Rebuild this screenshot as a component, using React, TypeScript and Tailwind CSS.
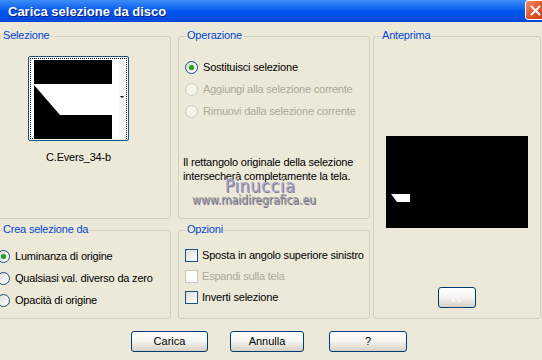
import React from "react";

function Group({ label, className, children }: { label: string; className?: string; children?: React.ReactNode }) {
  return (
    <div className={`relative rounded-[3px] border border-[#D0D0BF] ${className ?? ""}`}>
      <span className="absolute -top-[8px] left-[7px] bg-[#ECE9D8] px-[1px] text-[11px] leading-[13px] text-[#0046D5]">
        {label}
      </span>
      {children}
    </div>
  );
}

function Radio({ checked, disabled, label }: { checked?: boolean; disabled?: boolean; label: string }) {
  return (
    <div className="flex h-[22px] items-center gap-[5px] whitespace-nowrap">
      <span
        className={`flex h-[13px] w-[13px] shrink-0 items-center justify-center rounded-full border ${
          disabled
            ? "border-[#CAC8BB] bg-[#F5F4EA]"
            : "border-[#1C5180] bg-gradient-to-br from-[#DCDCD7] to-white"
        }`}
      >
        {checked && <span className="h-[5px] w-[5px] rounded-full bg-[#21A121] shadow-[0_0_1px_#7BD47B]" />}
      </span>
      <span className={disabled ? "text-[#ACA899]" : "text-black"}>{label}</span>
    </div>
  );
}

function Check({ disabled, label }: { disabled?: boolean; label: string }) {
  return (
    <div className="flex h-[21px] items-center gap-[4px] whitespace-nowrap">
      <span
        className={`h-[13px] w-[13px] shrink-0 border ${
          disabled ? "border-[#CAC8BB] bg-white" : "border-[#1C5180] bg-gradient-to-br from-[#DCDCD7] to-white"
        }`}
      />
      <span className={disabled ? "text-[#ACA899]" : "text-black"}>{label}</span>
    </div>
  );
}

function Button({ className, children }: { className?: string; children?: React.ReactNode }) {
  return (
    <button
      className={`flex h-[21px] items-center justify-center rounded-[3px] border border-[#003C74] bg-gradient-to-b from-white via-[#F4F3EE] to-[#D6D0C5] text-[11px] text-black ${className ?? ""}`}
    >
      {children}
    </button>
  );
}

export default function App() {
  return (
    <div className="flex h-[360px] w-[542px] flex-col overflow-hidden bg-[#ECE9D8] font-['Liberation_Sans',Arial,sans-serif] text-[11px] leading-[13px] tracking-[-0.2px] text-black">
      {/* title bar */}
      <div className="flex h-[22px] shrink-0 items-center justify-between bg-gradient-to-b from-[#3C8CF8] via-[#0058EE] to-[#0046D8] pl-[8px]">
        <span className="text-[13px] font-bold tracking-normal text-white [text-shadow:1px_1px_0_#0A1E8C]">Carica selezione da disco</span>
        <span className="mb-[2px] flex h-[20px] w-[21px] -mr-[4px] items-center justify-center rounded-[3px] border border-white bg-gradient-to-br from-[#F08F6C] via-[#E0552E] to-[#C83A12]">
          <svg width="11" height="11" viewBox="0 0 11 11">
            <path d="M1.5 1.5 L9.5 9.5 M9.5 1.5 L1.5 9.5" stroke="white" strokeWidth="2" strokeLinecap="round" />
          </svg>
        </span>
      </div>

      {/* groups */}
      <div className="mt-[14px] flex">
        <div className="-ml-[6px] flex w-[177px] flex-col gap-[11px]">
          <Group label="Selezione" className="h-[183px]">
            <div className="flex flex-col items-start pl-[33px] pt-[19px]">
              <div className="h-[85px] w-[101px] rounded-[2px] border border-[#1C5180] bg-white p-[1px]">
                <div className="relative h-full w-full border border-dotted border-black">
                  <svg width="97" height="81" viewBox="0 0 97 81" className="block">
                    <rect x="3" y="1" width="78" height="79" fill="black" />
                    <polygon points="3,25 81,25 81,56 29,56 3,26" fill="white" />
                    <rect x="81" y="1" width="7" height="79" fill="white" />
                    <rect x="88" y="1" width="6" height="79" fill="#F2F2F2" />
                    <polygon points="89,37 93,37 91,39" fill="black" />
                  </svg>
                </div>
              </div>
              <span className="mt-[10px] w-[101px] text-center">C.Evers_34-b</span>
            </div>
          </Group>
          <Group label="Crea selezione da" className="h-[89px]">
            <div className="flex flex-col pl-[2px] pt-[14px]">
              <Radio checked label="Luminanza di origine" />
              <Radio label="Qualsiasi val. diverso da zero" />
              <Radio label="Opacità di origine" />
            </div>
          </Group>
        </div>

        <div className="ml-[7px] flex w-[192px] flex-col gap-[11px]">
          <Group label="Operazione" className="h-[183px]">
            <div className="flex flex-col pl-[6px] pt-[19px]">
              <Radio checked label="Sostituisci selezione" />
              <Radio disabled label="Aggiungi alla selezione corrente" />
              <Radio disabled label="Rimuovi dalla selezione corrente" />
            </div>
            <div className="mt-[33px] pl-[4px] leading-[14px]">
              <p>Il rettangolo originale della selezione</p>
              <p>intersecherà completamente la tela.</p>
            </div>
            <div className="-mt-[6px] flex flex-col items-center">
              <span className="mr-[28px] font-['DejaVu_Sans_Condensed','DejaVu_Sans',sans-serif] text-[18px] leading-[17px] tracking-[0.5px] text-[#A7A2C6] [text-shadow:1px_1px_0_#7D7898]">
                Pinuccia
              </span>
              <span className="mr-[40px] font-['DejaVu_Sans_Condensed','DejaVu_Sans',sans-serif] text-[12px] leading-[13px] tracking-normal text-[#9A98A6] [text-shadow:1px_1px_0_#6F6D7C]">
                www.maidiregrafica.eu
              </span>
            </div>
          </Group>
          <Group label="Opzioni" className="h-[89px]">
            <div className="flex flex-col pl-[6px] pt-[14px]">
              <Check label="Sposta in angolo superiore sinistro" />
              <Check disabled label="Espandi sulla tela" />
              <Check label="Inverti selezione" />
            </div>
          </Group>
        </div>

        <div className="ml-[3px] flex w-[168px] flex-col">
          <Group label="Anteprima" className="flex h-[283px] flex-col items-center">
            <div className="ml-[12px] mr-[12px] mt-[99px] self-stretch">
              <svg width="142" height="92" viewBox="0 0 142 92" className="block">
                <rect width="142" height="92" fill="black" />
                <polygon points="5,58 24,58 24,66 11,66" fill="white" />
              </svg>
            </div>
            <Button className="mt-[59px] h-[20px] w-[38px]">
              <svg width="14" height="10" viewBox="0 0 14 10">
                <rect x="2" y="0" width="3" height="3" fill="#F7F7F7" />
                <rect x="8" y="0" width="3" height="3" fill="#F7F7F7" />
                <rect x="5" y="3" width="3" height="3" fill="#F7F7F7" />
                <rect x="2" y="6" width="3" height="3" fill="#F7F7F7" />
                <rect x="8" y="6" width="3" height="3" fill="#F7F7F7" />
              </svg>
            </Button>
          </Group>
        </div>
      </div>

      {/* buttons */}
      <div className="mt-[12px] flex pl-[131px] tracking-normal">
        <Button className="w-[77px]">Carica</Button>
        <Button className="ml-[22px] w-[74px]">Annulla</Button>
        <Button className="ml-[25px] w-[78px]">?</Button>
      </div>
    </div>
  );
}
